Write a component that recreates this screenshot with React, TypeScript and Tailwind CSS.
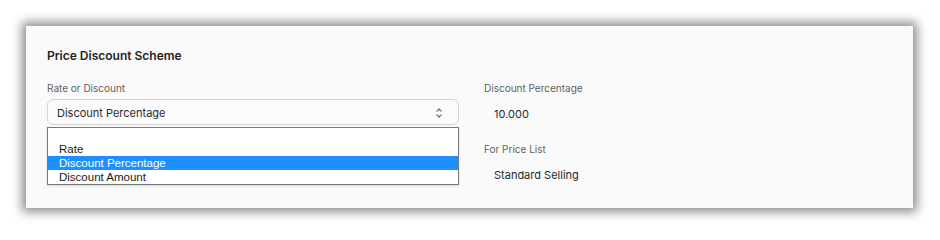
const SelectChevrons = () => (
  <svg width="8" height="12" viewBox="0 0 8 12" fill="none" aria-hidden>
    <path d="M1.8 4.2 L4 2 L6.2 4.2" stroke="#6b6b6b" strokeWidth="1.2" strokeLinecap="round" strokeLinejoin="round" />
    <path d="M1.8 7.8 L4 10 L6.2 7.8" stroke="#6b6b6b" strokeWidth="1.2" strokeLinecap="round" strokeLinejoin="round" />
  </svg>
);

const options = ["", "Rate", "Discount Percentage", "Discount Amount"];

const ReadOnlyField = ({ label, value }: { label: string; value: string }) => (
  <div className="flex flex-col">
    <div className="h-4 text-[10px] leading-4 text-[#5f5f5f]">{label}</div>
    <div className="mt-[5px] flex h-[26px] items-center px-[10px] text-[11px] text-[#2b2b2b]">{value}</div>
  </div>
);

export default function App() {
  return (
    <div className="min-h-[235px] w-[940px] bg-white pt-[26px] pl-[26px]" style={{ fontFamily: "Inter, 'Noto Sans', sans-serif" }}>
      <div className="h-[182px] w-[887px] bg-[#fafafa] pt-[22px] pl-[21px] shadow-[0_0_10px_4px_rgba(0,0,0,0.45)]">
        <h2 className="h-4 text-[12px] font-semibold leading-4 text-[#1f1f1f]">Price Discount Scheme</h2>

        <div className="mt-4 flex gap-[25px]">
          <div className="relative w-[412px]">
            <div className="h-4 text-[10px] leading-4 text-[#5f5f5f]">Rate or Discount</div>
            <div className="mt-[3px] flex h-[26px] items-center justify-between rounded-[6px] border border-[#d4d4d4] bg-[#fbfbfb] pt-[2px] pl-[9px] pr-[15px] text-[11px] text-[#2b2b2b]">
              <span>Discount Percentage</span>
              <SelectChevrons />
            </div>

            <ul
              className="absolute left-0 top-[47px] w-[412px] border border-[#7a7a7a] bg-white text-[11.5px] leading-[14px] text-[#1a1a1a] shadow-[0_1px_2px_rgba(0,0,0,0.15)]"
              style={{ fontFamily: "'Liberation Sans', Arial, sans-serif" }}
            >
              {options.map((opt, i) => (
                <li
                  key={i}
                  className={
                    opt === "Discount Percentage"
                      ? "h-[14px] bg-[#1e8fff] pl-[11px] text-white"
                      : "h-[14px] pl-[11px]"
                  }
                >
                  {opt}
                </li>
              ))}
            </ul>
          </div>

          <div className="flex flex-col gap-[14px]">
            <ReadOnlyField label="Discount Percentage" value="10.000" />
            <ReadOnlyField label="For Price List" value="Standard Selling" />
          </div>
        </div>
      </div>
    </div>
  );
}
